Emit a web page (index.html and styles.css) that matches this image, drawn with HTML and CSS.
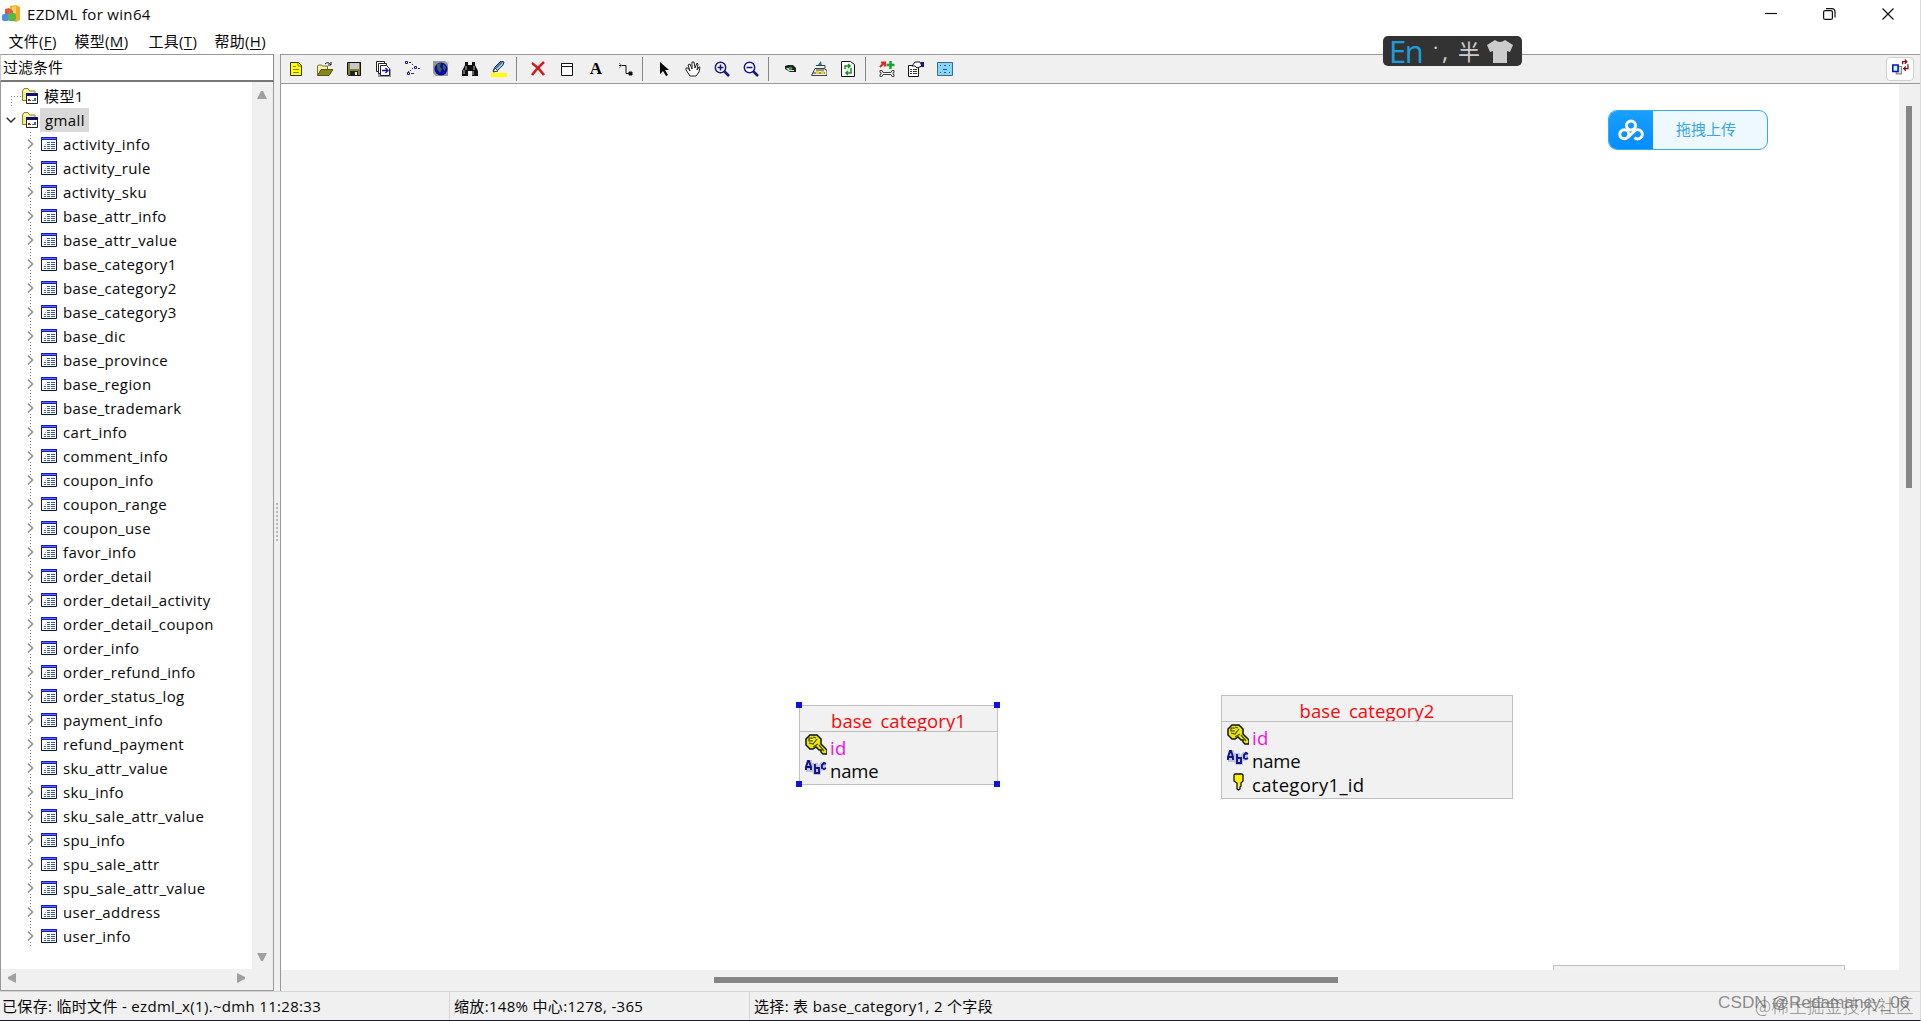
FILE: index.html
```html
<!DOCTYPE html>
<html lang="zh-CN">
<head>
<meta charset="utf-8">
<title>EZDML for win64</title>
<link rel="stylesheet" href="styles.css">
</head>
<body>
<svg class="defs" width="0" height="0" aria-hidden="true">
  <symbol id="folder" viewBox="0 0 16 16">
    <path d="M.5 12.500V3L2 .5h4L7.500 3H13v9.500z" fill="#f3ed8a" stroke="#8c8428"/>
    <path d="M2 3h4l2 2h4" fill="none" stroke="#fffde0"/>
    <path d="M4.500 6.500h11v9h-11z" fill="#fff" stroke="#222"/>
    <path d="M4 5h12v3H4z" fill="#111172"/>
    <path d="M6 11h2v2H6zM8 12h1v1H8z" fill="#b52020"/><path d="M10 12h2v1h-2zM12 10h2v3h-2z" fill="#357090"/>
  </symbol>
  <symbol id="table" viewBox="0 0 16 14">
    <path d="M.5.5h15v13H.5z" fill="#fff" stroke="#101050"/>
    <path d="M0 0h16v3H0z" fill="#1717dd"/><path d="M1 1h14v1H1z" fill="#4f70f2"/>
    <path d="M6 5h3v1H6zM10 5h4v1h-4zM3 9h2v1H3zM6 7h3v1H6zM10 7h4v1h-4zM6 9h3v1H6zM10 9h4v1h-4zM3 11h2v1H3zM6 11h3v1H6zM10 11h4v1h-4z" fill="#34589a"/>
    <path d="M4 7h1v1H4z" fill="#999"/>
  </symbol>
  <symbol id="chev" viewBox="0 0 7 10"><path d="M1 .7 5.500 5 1 9.300" fill="none" stroke="#969696" stroke-width="1.600"/></symbol>
  <symbol id="key" viewBox="0 0 22 21">
    <path d="M5 1h7l4 4v5l4 4 2 2v4h-4l-2-2v-2h-2l-3-3-3 2H5l-4-4V5z" fill="#ece800" stroke="#111" stroke-width="1.500"/>
    <path d="M4 4h3v3H4zM8 3l3 1M4 9l4 1 4-5M14 11l5 6M8 13l5-3" fill="none" stroke="#494900" stroke-width="1.200"/><path d="M6 5h2v1H6z" fill="#fff"/>
  </symbol>
  <symbol id="abc" viewBox="0 0 22 17">
    <path d="M2 1h5v3h6v3l3-4h5v8l-5 1v4H9l-2-3H1V6z" fill="#c1c5dc"/>
    <path d="M1 11V8l2-6h1l2 6v3M1 8h5M10 5v9h4V9h-4M21 5l-2-1-2 2v3l2 1 2-1" fill="none" stroke="#11118c" stroke-width="1.900"/>
  </symbol>
  <symbol id="fkey" viewBox="0 0 11 18">
    <path d="M2 1h7l1 1v6L8 10v3L7 14v2L5.500 17 4 16v-6L1 8V2z" fill="#fff000" stroke="#111" stroke-width="1.300"/><path d="M5 13h1v3H5z" fill="#fff"/>
  </symbol>
</svg>
<div class="window">
  <header class="titlebar">
    <svg class="logo" viewBox="0 0 18 18"><path d="M8 1l6-1 4 2v13l-4 2-6-2z" fill="#efab22"/><path d="M10 2l4-1v14l-4-1z" fill="#f9d35d"/><path d="M3 4l4-1 4 3v4H3z" fill="#dc5a46"/><rect x="0" y="9" width="7" height="7" rx="2" fill="#4d8fdc"/><rect x="6" y="8" width="8" height="8" rx="2" fill="#58b84b"/></svg>
    <span class="title">EZDML for win64</span>
    <svg class="winctl" viewBox="0 0 130 14" fill="none" stroke="#111" stroke-width="1.200"><path d="M0 6.500h12"/><rect x="58.600" y="3.600" width="8.800" height="8.800" rx="1.500"/><path d="M61 1.600h6a3 3 0 0 1 3 3v6M117.500 1.500l11 11M128.500 1.500l-11 11"/></svg>
  </header>
  <nav class="menu"><span>文件(<u>F</u>)</span><span>模型(<u>M</u>)</span><span>工具(<u>T</u>)</span><span>帮助(<u>H</u>)</span></nav>
  <div class="main">
    <aside class="side">
      <div class="filter">过滤条件</div>
      <div class="treebox">
        <div class="tree">
          <div class="row root first"><svg class="fold"><use href="#folder"/></svg><span>模型1</span></div>
          <div class="row root"><svg class="open" viewBox="0 0 10 6"><path d="M.7.700 5 5 9.300.700" fill="none" stroke="#333" stroke-width="1.500"/></svg><svg class="fold"><use href="#folder"/></svg><span class="sel">gmall</span></div>
          <div class="row"><svg class="chev"><use href="#chev"/></svg><svg class="tb"><use href="#table"/></svg><span>activity_info</span></div>
          <div class="row"><svg class="chev"><use href="#chev"/></svg><svg class="tb"><use href="#table"/></svg><span>activity_rule</span></div>
          <div class="row"><svg class="chev"><use href="#chev"/></svg><svg class="tb"><use href="#table"/></svg><span>activity_sku</span></div>
          <div class="row"><svg class="chev"><use href="#chev"/></svg><svg class="tb"><use href="#table"/></svg><span>base_attr_info</span></div>
          <div class="row"><svg class="chev"><use href="#chev"/></svg><svg class="tb"><use href="#table"/></svg><span>base_attr_value</span></div>
          <div class="row"><svg class="chev"><use href="#chev"/></svg><svg class="tb"><use href="#table"/></svg><span>base_category1</span></div>
          <div class="row"><svg class="chev"><use href="#chev"/></svg><svg class="tb"><use href="#table"/></svg><span>base_category2</span></div>
          <div class="row"><svg class="chev"><use href="#chev"/></svg><svg class="tb"><use href="#table"/></svg><span>base_category3</span></div>
          <div class="row"><svg class="chev"><use href="#chev"/></svg><svg class="tb"><use href="#table"/></svg><span>base_dic</span></div>
          <div class="row"><svg class="chev"><use href="#chev"/></svg><svg class="tb"><use href="#table"/></svg><span>base_province</span></div>
          <div class="row"><svg class="chev"><use href="#chev"/></svg><svg class="tb"><use href="#table"/></svg><span>base_region</span></div>
          <div class="row"><svg class="chev"><use href="#chev"/></svg><svg class="tb"><use href="#table"/></svg><span>base_trademark</span></div>
          <div class="row"><svg class="chev"><use href="#chev"/></svg><svg class="tb"><use href="#table"/></svg><span>cart_info</span></div>
          <div class="row"><svg class="chev"><use href="#chev"/></svg><svg class="tb"><use href="#table"/></svg><span>comment_info</span></div>
          <div class="row"><svg class="chev"><use href="#chev"/></svg><svg class="tb"><use href="#table"/></svg><span>coupon_info</span></div>
          <div class="row"><svg class="chev"><use href="#chev"/></svg><svg class="tb"><use href="#table"/></svg><span>coupon_range</span></div>
          <div class="row"><svg class="chev"><use href="#chev"/></svg><svg class="tb"><use href="#table"/></svg><span>coupon_use</span></div>
          <div class="row"><svg class="chev"><use href="#chev"/></svg><svg class="tb"><use href="#table"/></svg><span>favor_info</span></div>
          <div class="row"><svg class="chev"><use href="#chev"/></svg><svg class="tb"><use href="#table"/></svg><span>order_detail</span></div>
          <div class="row"><svg class="chev"><use href="#chev"/></svg><svg class="tb"><use href="#table"/></svg><span>order_detail_activity</span></div>
          <div class="row"><svg class="chev"><use href="#chev"/></svg><svg class="tb"><use href="#table"/></svg><span>order_detail_coupon</span></div>
          <div class="row"><svg class="chev"><use href="#chev"/></svg><svg class="tb"><use href="#table"/></svg><span>order_info</span></div>
          <div class="row"><svg class="chev"><use href="#chev"/></svg><svg class="tb"><use href="#table"/></svg><span>order_refund_info</span></div>
          <div class="row"><svg class="chev"><use href="#chev"/></svg><svg class="tb"><use href="#table"/></svg><span>order_status_log</span></div>
          <div class="row"><svg class="chev"><use href="#chev"/></svg><svg class="tb"><use href="#table"/></svg><span>payment_info</span></div>
          <div class="row"><svg class="chev"><use href="#chev"/></svg><svg class="tb"><use href="#table"/></svg><span>refund_payment</span></div>
          <div class="row"><svg class="chev"><use href="#chev"/></svg><svg class="tb"><use href="#table"/></svg><span>sku_attr_value</span></div>
          <div class="row"><svg class="chev"><use href="#chev"/></svg><svg class="tb"><use href="#table"/></svg><span>sku_info</span></div>
          <div class="row"><svg class="chev"><use href="#chev"/></svg><svg class="tb"><use href="#table"/></svg><span>sku_sale_attr_value</span></div>
          <div class="row"><svg class="chev"><use href="#chev"/></svg><svg class="tb"><use href="#table"/></svg><span>spu_info</span></div>
          <div class="row"><svg class="chev"><use href="#chev"/></svg><svg class="tb"><use href="#table"/></svg><span>spu_sale_attr</span></div>
          <div class="row"><svg class="chev"><use href="#chev"/></svg><svg class="tb"><use href="#table"/></svg><span>spu_sale_attr_value</span></div>
          <div class="row"><svg class="chev"><use href="#chev"/></svg><svg class="tb"><use href="#table"/></svg><span>user_address</span></div>
          <div class="row"><svg class="chev"><use href="#chev"/></svg><svg class="tb"><use href="#table"/></svg><span>user_info</span></div>
        </div>
        <div class="tree-v"><svg viewBox="0 0 10 8"><path d="M4 0h2l4 8H0z"/></svg><svg viewBox="0 0 10 8"><path d="M0 0h10L6 8H4z"/></svg></div>
        <div class="tree-h"><svg viewBox="0 0 8 10"><path d="M8 0v10L0 6V4z"/></svg><svg viewBox="0 0 8 10"><path d="M0 0v10l8-4V4z"/></svg></div>
      </div>
    </aside>
    <div class="splitter"><i></i></div>
    <section class="work">
      <div class="toolbar">
        <b><svg viewBox="0 0 16 16"><path d="M2.500 1.500h8l3 3v10h-11z" fill="#ff0" stroke="#333300"/><path d="M10 2v3h3M5 5.500h3M5 8.500h6M5 11.500h6" fill="none" stroke="#808000"/></svg></b>
        <b><svg viewBox="0 0 16 16"><path d="M.5 14V5l1-1h3l1 1h5v4" fill="#f4f0b0" stroke="#77712a"/><path d="M.5 14.500 4 8.500h12l-4 6z" fill="#88861c" stroke="#555310"/><path d="M8 3q3-3 6 1M14 1v3h-3" fill="none" stroke="#222"/></svg></b>
        <b><svg viewBox="0 0 16 16"><path d="M1.500 1.500h13v13h-12l-1-1z" fill="#808033" stroke="#111"/><path d="M4 2h9v6H4z" fill="#c9c9c9"/><path d="M4 10h8v5H4z" fill="#222"/><path d="M9 11h2v3H9z" fill="#eee"/></svg></b>
        <b><svg viewBox="0 0 16 16"><path d="M4 4v11h12V8" stroke="#999" stroke-width="2" fill="none"/><g fill="#fff" stroke="#222"><path d="M1.500.5h8v10h-8z"/><path d="M3.500 2.500h8v10h-8z"/><path d="M5.500 4.500h6l3 3v7h-9z"/></g><path d="M7 9.500h6M10.500 7l2.500 2.500-2.500 2.500" fill="none" stroke="#1515a0" stroke-width="1.400"/></svg></b>
        <b><svg viewBox="0 0 16 16" fill="none" stroke="#17179a"><path d="M1.500.5h2v2h-2zM10.500 5.500h2v2h-2zM3.500 11.500h2v2h-2z"/><path d="M5 1.500h2M8 3.500h1M8 7.500h1M6 9.500h1M14 7.500h2M7 12.500h3M4 10.500h1" stroke="#333"/></svg></b>
        <b><svg viewBox="0 0 16 16"><path d="M0 0h15v15H0z" fill="#979797"/><path d="M12 0h4v4zM0 12v4h4z" fill="#ddd"/><circle cx="8" cy="8" r="6.500" fill="#0909a6"/><path d="M4 3l4-1-1 4 2 2-2 4-3-4zM10 3l3 3-1 4-2-2z" fill="#3a6254"/></svg></b>
        <b><svg viewBox="0 0 16 16"><path d="M3 1h3v3h4V1h3v3l3 6v5h-6v-5H6v5H0v-5l3-6z" fill="#111"/><path d="M4 5v4M2 9v4M12 5v4M11 10v4" stroke="#bbb"/></svg></b>
        <b><svg viewBox="0 0 16 16"><path d="M0 12h16v4H0z" fill="#ff0"/><path d="M2 10l2-4 6-6 3 1-1 3-6 6z" fill="#b7dbe4" stroke="#202060"/><path d="M2 11l2-4 3 3z" fill="#fff" stroke="#333"/><path d="M5 7l6-6" stroke="#39759d" stroke-width="2"/></svg></b>
        <em></em>
        <b><svg viewBox="0 0 16 16"><path d="M2 2q7 5 12 12M14 1Q7 7 2 14" fill="none" stroke="#d01c1c" stroke-width="2.500"/></svg></b>
        <b><svg viewBox="0 0 16 16"><path d="M2.500 2.500h11v12h-11zM2 5.500h12" fill="#fff" stroke="#111"/></svg></b>
        <b><span class="letter">A</span></b>
        <b><svg viewBox="0 0 16 16" fill="none" stroke="#111"><path d="M2 4.500h7v8h5"/><path d="M2 2l3 2.500L2 7" stroke="#888"/><path d="M12 11h3v3h-3z" fill="#111"/></svg></b>
        <em></em>
        <b><svg viewBox="0 0 16 16"><path d="M4 1v12l3-3 3 5 2-1-3-5h4z" fill="#050505"/></svg></b>
        <b><svg viewBox="0 0 16 16"><path d="M5 15 1 9V7h2l2 3-2-6 2-1 2 5V1h2l1 6 2-5 1 1-1 6 2-3h1l-1 5-3 4z" fill="#fff" stroke="#222"/></svg></b>
        <b><svg viewBox="0 0 16 16" fill="none" stroke="#171786"><circle cx="6.500" cy="6.500" r="5.200" fill="#fff" stroke-width="1.500"/><path d="M10 10l5 5" stroke-width="2.500"/><path d="M3.500 6.500h6M6.500 3.500v6" stroke-width="1.600"/></svg></b>
        <b><svg viewBox="0 0 16 16" fill="none" stroke="#171786"><circle cx="6.500" cy="6.500" r="5.200" fill="#fff" stroke-width="1.500"/><path d="M10 10l5 5" stroke-width="2.500"/><path d="M3.500 6.500h6" stroke-width="1.600"/></svg></b>
        <em></em>
        <b><svg viewBox="0 0 16 16"><path d="M3 5l3-1h5l3 3v4H8L3 8z" fill="#222"/><path d="M4 7h3l1 2h4v1H7z" fill="#ddd"/><circle cx="8.500" cy="7.500" r="1.800" fill="#28a53a"/></svg></b>
        <b><svg viewBox="0 0 16 16"><path d="M6 5l4-5 1 5z" fill="#178080"/><path d="M5 4.500h9v3h-2" fill="none" stroke="#345"/><path d="M.5 14.500 4 7.500h9l3 2v5z" fill="#eee" stroke="#444"/><path d="M2 12h12M5 9h8" stroke="#333"/><path d="M5 10h3v3H5zM10 10h3v3h-3z" fill="#e8d52a"/></svg></b>
        <b><svg viewBox="0 0 16 16"><path d="M1.500.5h9l4 3v12h-13z" fill="#fff" stroke="#111"/><path d="M5 8V5h5M8 3l2 2-2 2M11 7v5H6M8 10l-2 2 2 2" fill="none" stroke="#159022" stroke-width="1.500"/></svg></b>
        <em></em>
        <b><svg viewBox="0 0 16 16"><path d="M1 6 5 2M2 1.500h4v4" fill="none" stroke="#e22" stroke-width="2"/><path d="M7.500 4h8M11.500 0v8" stroke="#1da32d" stroke-width="2.500"/><path d="M1 9.500h2l1 2h8l1-2h2v2h-1v2h1v2h-2l-1-2H4l-1 2H1v-2h1v-2H1z" fill="#fff" stroke="#444"/></svg></b>
        <b><svg viewBox="0 0 16 16"><path d="M.5 4.500h10v11H.5z" fill="#fff" stroke="#111"/><path d="M2 8.500h2M5 8.500h4M2 10.500h2M5 10.500h4M2 12.500h2M5 12.500h4" stroke="#333"/><path d="M4 5l3-4h5l2 4-5 2-2-2z" fill="#fff" stroke="#111"/><path d="M13 1h3v5h-3z" fill="#14148c"/></svg></b>
        <b><svg viewBox="0 0 16 16"><path d="M.5 1.500h15v13H.5z" fill="#88d4fb" stroke="#416b85"/><path d="M3 4.500h1M12 4.500h1M3 11.500h1M12 11.500h1M7 4.500h2M7 11.500h2M6 8.500h4" stroke="#29579a"/></svg></b>
        <div class="swap"><svg viewBox="0 0 16 16"><path d="M4 7v7h5V7z" fill="#ddd" stroke="#888"/><path d="M.7 5.700h5v6h-5z" fill="#bff" stroke="#1010b8" stroke-width="1.500"/><path d="M10 5V2.500h4M12 .5l2 2-2 2M15 5v4h-4M13 7l-2 2 2 2" fill="none" stroke="#841017" stroke-width="1.200"/></svg></div>
      </div>
      <div class="body">
        <div class="canvas">
          <div class="entity e1">
            <h3>base<s>_</s>category1</h3>
            <p class="pk"><svg class="k"><use href="#key"/></svg><span>id</span></p>
            <p><svg class="a"><use href="#abc"/></svg><span>name</span></p>
            <i class="h tl"></i><i class="h tr"></i><i class="h bl"></i><i class="h br"></i>
          </div>
          <div class="entity e2">
            <h3>base<s>_</s>category2</h3>
            <p class="pk"><svg class="k"><use href="#key"/></svg><span>id</span></p>
            <p><svg class="a"><use href="#abc"/></svg><span>name</span></p>
            <p><svg class="f"><use href="#fkey"/></svg><span>category1_id</span></p>
          </div>
          <div class="entity e3"></div>
        </div>
        <div class="vs"><i></i></div>
        <div class="hs"><i></i></div>
      </div>
    </section>
  </div>
  <footer class="status"><span>已保存: 临时文件 - ezdml_x(1).~dmh 11:28:33</span><span>缩放:148% 中心:1278, -365</span><span>选择: 表 base_category1, 2 个字段</span></footer>
  <div class="ime"><span class="en">En</span><span class="dot">·</span><span class="comma">,</span><span class="half">半</span><svg viewBox="0 0 26 23"><path d="M8 0q5 4 10 0l8 5-3 7-3-1v12H6V11l-3 1-3-7z" fill="#ccc"/></svg></div>
  <div class="upload"><div><svg viewBox="0 0 26 22" fill="none" stroke="#fff" stroke-width="3"><circle cx="13" cy="6.500" r="4.500"/><circle cx="6.300" cy="15.300" r="4.500"/><path d="M9.700 18.500 16.500 12a4.600 4.600 0 1 1 0 6.600"/></svg></div><span>拖拽上传</span></div>
  <div class="wm csdn">CSDN @Redamancy_06</div>
  <div class="wm juejin">@稀土掘金技术社区</div>
</div>
</body>
</html>
```
FILE: styles.css
```css
* { box-sizing: border-box; }
body { margin: 0; overflow: hidden; font: 15px/24px "Open Sans", "Noto Sans CJK SC", sans-serif; color: #080808; background: #fff; }
svg { display: block; flex: none; }
.defs { position: absolute; }
.window { position: relative; width: 1921px; height: 1021px; display: flex; flex-direction: column; border-right: 1px solid #d9d9d9; border-bottom: 1px solid #1e1b2c; background: #fff; }
.titlebar { height: 28px; display: flex; align-items: center; padding: 0 25px 0 2px; }
.logo { width: 18px; height: 18px; }
.title { margin-left: 7px; font-size: 15px; letter-spacing: .32px; }
.winctl { width: 130px; height: 14px; margin-left: auto; }
.menu { height: 26px; display: grid; grid-template-columns: 66px 74px 66px 66px; padding-left: 8.500px; line-height: 27px; letter-spacing: .3px; white-space: nowrap; }
.menu u { text-underline-offset: 2px; }
.main { height: 937px; display: flex; background: #f0f0f0; }
.side { width: 274px; display: flex; flex-direction: column; }
.filter { height: 28px; border: 1px solid #8b8b8b; border-top-color: #999; border-left-color: #ccc; border-bottom: 2px solid #777; background: #fff; padding-left: 2px; line-height: 25px; }
.treebox { flex: 1; display: grid; grid-template-columns: 251px 1fr; grid-template-rows: 887px 1fr; border: 1px solid #999; border-top: 0; background: #f0f0f0; }
.tree { background: #fff; padding-top: 2px; overflow: hidden; }
.row { height: 24px; display: flex; align-items: center; padding-left: 26px; letter-spacing: .38px; white-space: nowrap; background: linear-gradient(#fff, #fff) 29px 8px / 1px 9px no-repeat, repeating-linear-gradient(#888 0 1px, #fff 1px 3px) 29px 0 / 1px 24px no-repeat; }
.row.root { padding-left: 21px; background: none; }
.row.first { background: repeating-linear-gradient(90deg, #888 0 1px, #fff 1px 3px) 10px 12px / 10px 1px no-repeat, repeating-linear-gradient(#888 0 1px, #fff 1px 3px) 10px 12px / 1px 12px no-repeat; }
.chev { width: 7px; height: 10px; }
.tb { width: 16px; height: 14px; margin: 0 6px 0 7px; }
.fold { width: 16px; height: 16px; margin-right: 2px; }
.root span { padding: 0 4px; }
.open { width: 10px; height: 6px; margin: 0 6px 0 -16px; }
.root .sel { background: #d9d9d9; width: 49px; padding-left: 5px; }
.tree-v { display: flex; flex-direction: column; justify-content: space-between; align-items: center; padding: 9px 2px 8px 0; }
.tree-v svg { width: 10px; height: 8px; fill: #a0a0a0; }
.tree-h { width: 250px; display: flex; justify-content: space-between; align-items: center; padding: 0 6px 3px 7px; }
.tree-h svg { width: 8px; height: 10px; fill: #a0a0a0; }
.splitter { width: 7px; display: flex; align-items: center; justify-content: center; padding-right: 1px; }
.splitter i { width: 2px; height: 38px; margin-top: -1px; background: repeating-linear-gradient(#b8b8b8 0 2px, #f0f0f0 2px 4px); }
.work { width: 1639px; display: flex; flex-direction: column; box-shadow: -1px 0 #999; }
.toolbar { height: 30px; display: flex; align-items: center; padding-left: 1px; border-top: 1px solid #999; border-bottom: 1px solid #999; }
.toolbar b { width: 28.900px; display: flex; justify-content: center; }
.toolbar b svg { width: 16px; height: 16px; }
.toolbar em { width: 10.500px; height: 24px; background: linear-gradient(#888, #888) 3px 0 / 1px 24px no-repeat; }
.letter { font: bold 17px/16px "Liberation Serif", serif; color: #000; }
.swap { width: 28px; height: 24px; margin: 0 6px 0 auto; border: 1px solid #d0d0d0; border-radius: 4px; background: #fff; display: flex; justify-content: center; padding-top: 1px; }
.swap svg { width: 17px; height: 17px; }
.body { flex: 1; display: grid; grid-template-columns: 1618px 1fr; grid-template-rows: 886px 1fr; }
.canvas { position: relative; background: #fff; overflow: hidden; }
.vs { padding: 22px 0 0 7px; }
.vs i { display: block; width: 6px; height: 382px; background: #858585; }
.hs { padding: 7px 0 0 433px; }
.hs i { display: block; width: 624px; height: 6px; background: #858585; }
.entity { position: absolute; border: 1px solid #c0c0c0; background: #f1f1f1; font-size: 18.500px; }
.e1 { left: 518px; top: 621px; width: 199px; height: 80px; }
.e2 { left: 940px; top: 611px; width: 292px; height: 104px; }
.e3 { left: 1272px; top: 881px; width: 292px; height: 60px; }
.entity h3 { margin: 0; height: 26px; border-bottom: 1px solid #c0c0c0; color: #f80808; font-weight: 400; font-size: 18.500px; line-height: 30px; letter-spacing: .1px; text-align: center; overflow: hidden; }
.entity s { text-decoration: none; color: transparent; }
.entity p { margin: 0; height: 23.500px; display: flex; padding-left: 5px; line-height: 32px; }
.entity p span { margin-left: auto; width: calc(100% - 25px); white-space: nowrap; letter-spacing: .3px; }
.entity p:nth-of-type(2) span { margin-top: -1px; letter-spacing: -.2px; }
.entity .pk span { color: #f010e8; }
.entity .k { width: 22px; height: 21px; margin: 2px 0 0; }
.entity .a { width: 22px; height: 17px; margin: 3px 0 0; }
.entity .f { width: 11px; height: 18px; margin: 4px 5px 0 6px; }
.h { position: absolute; width: 6px; height: 6px; background: #1010e0; }
.tl { left: -4px; top: -4px; } .tr { right: -3px; top: -4px; }
.bl { left: -4px; bottom: -3px; } .br { right: -3px; bottom: -3px; }
.status { height: 29px; display: grid; grid-template-columns: 449px 300px 1fr; background: #f0f0f0; border-top: 1px solid #d5d5d5; line-height: 28px; letter-spacing: .32px; white-space: nowrap; }
.status span { padding-left: 4px; border-left: 1px solid #d5d5d5; }
.status span:first-child { border: 0; padding-left: 2px; }
.ime { position: absolute; left: 1383px; top: 36px; width: 139px; height: 30px; border-radius: 5px; background: #333; color: #ccc; display: flex; align-items: center; padding-left: 6px; }
.en { width: 44px; font: 31px/30px "Open Sans", sans-serif; color: #1c9ede; letter-spacing: -1.500px; }
.dot { width: 9px; font-size: 20px; margin-top: -7px; }
.comma { width: 16px; font-size: 24px; }
.half { width: 29px; font-size: 22px; }
.ime svg { width: 26px; height: 23px; }
.upload { position: absolute; left: 1608px; top: 110px; width: 160px; height: 40px; border: 1px solid #36aaf0; border-radius: 9px; overflow: hidden; display: flex; background: #eef8ff; }
.upload div { width: 44px; background: linear-gradient(#16a0ff, #078cff); display: flex; align-items: center; justify-content: center; }
.upload svg { width: 26px; height: 22px; }
.upload span { padding-left: 23px; line-height: 37px; color: #36a5ec; }
.wm { position: absolute; white-space: nowrap; color: rgba(90, 90, 90, .68); }
.csdn { left: 1718px; top: 990px; font: 17.200px/24px "Liberation Sans", sans-serif; }
.juejin { left: 1755px; top: 993px; font: 300 17.800px/24px "Noto Sans CJK SC", sans-serif; }
```
